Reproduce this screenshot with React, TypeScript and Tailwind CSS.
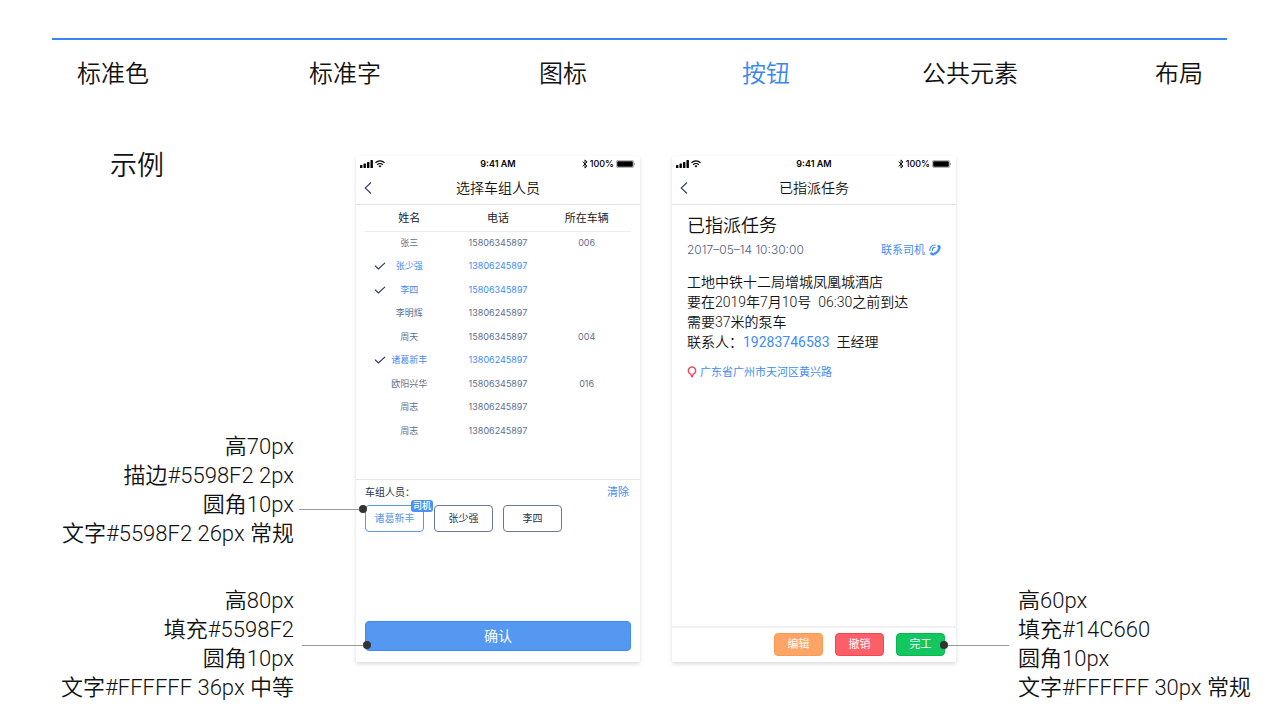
import { useState } from "react";
import type { ReactNode } from "react";
import clsx from "clsx";

const tabs = ["标准色", "标准字", "图标", "按钮", "公共元素", "布局"];

const crew = [
  { id: 1, name: "张三", phone: "15806345897", car: "006" },
  { id: 2, name: "张少强", phone: "13806245897", car: "" },
  { id: 3, name: "李四", phone: "15806345897", car: "" },
  { id: 4, name: "李明辉", phone: "13806245897", car: "" },
  { id: 5, name: "周天", phone: "15806345897", car: "004" },
  { id: 6, name: "诸葛新丰", phone: "13806245897", car: "" },
  { id: 7, name: "欧阳兴华", phone: "15806345897", car: "016" },
  { id: 8, name: "周志", phone: "13806245897", car: "" },
  { id: 9, name: "周志", phone: "13806245897", car: "" },
];

function StatusBar() {
  return (
    <div className="grid h-4 grid-cols-3 items-center pr-1 pl-1 text-[9px] font-semibold text-black">
      <div className="flex items-center gap-0.5">
        <svg width="13" height="8" viewBox="0 0 13 8" aria-hidden="true">
          <rect x="0" y="5" width="2.4" height="3" rx="0.6" />
          <rect x="3.5" y="3.5" width="2.4" height="4.5" rx="0.6" />
          <rect x="7" y="2" width="2.4" height="6" rx="0.6" />
          <rect x="10.5" y="0" width="2.4" height="8" rx="0.6" />
        </svg>
        <svg
          width="10"
          height="8"
          viewBox="0 0 10 8"
          fill="none"
          stroke="black"
          strokeWidth="1.2"
          aria-hidden="true"
        >
          <path d="M0.5 2.8a6.4 6.4 0 0 1 9 0" />
          <path d="M2.2 4.7a4 4 0 0 1 5.6 0" />
          <path d="M3.5 6 5 7.6 6.5 6a2.1 2.1 0 0 0-3 0z" fill="black" stroke="none" />
        </svg>
      </div>
      <span className="text-center">9:41 AM</span>
      <div className="flex items-center justify-end gap-0.5">
        <svg
          width="6"
          height="10"
          viewBox="0 0 6 10"
          fill="none"
          stroke="black"
          strokeWidth="0.9"
          aria-hidden="true"
        >
          <path d="M0.6 2.7 5 7 3 9.1V0.9L5 3 0.6 7.3" />
        </svg>
        <span className="font-medium">100%</span>
        <svg width="20" height="8" viewBox="0 0 20 8" aria-hidden="true">
          <rect x="0.4" y="0.4" width="17.2" height="7.2" rx="1.6" fill="none" stroke="#777" strokeWidth="0.6" />
          <rect x="1.2" y="1.2" width="15.6" height="5.6" rx="0.8" />
          <path d="M18.4 2.6c1 .4 1 2.4 0 2.8z" fill="#777" />
        </svg>
      </div>
    </div>
  );
}

function Phone({ title, children }: { title: string; children: ReactNode }) {
  return (
    <section className="flex min-h-[506px] w-[284px] shrink-0 flex-col bg-white shadow-[0_2px_4px_rgba(0,0,0,0.14)]">
      <StatusBar />
      <header className="grid h-[33px] grid-cols-[24px_1fr_24px] items-center border-b border-[#e3e4e6]">
        <button aria-label="返回" className="flex justify-center">
          <svg
            width="8"
            height="12"
            viewBox="0 0 8 12"
            fill="none"
            stroke="#34405e"
            strokeWidth="1.1"
            aria-hidden="true"
          >
            <path d="M7 0.5 1.2 6 7 11.5" />
          </svg>
        </button>
        <h2 className="text-center text-sm font-[350]">{title}</h2>
      </header>
      {children}
    </section>
  );
}

function CrewPhone() {
  const [picked, setPicked] = useState([6, 2, 3]);

  const toggle = (id: number) =>
    setPicked(
      picked.includes(id) ? picked.filter((p) => p !== id) : [...picked, id]
    );

  return (
    <Phone title="选择车组人员">
      <div className="grow px-[9px]">
        <table className="w-full table-fixed text-center text-[9px] text-[#5f6f8f]">
          <thead className="text-[11px] text-[#222]">
            <tr className="h-[26px] border-b border-[#eceef2]">
              <th className="font-normal">姓名</th>
              <th className="font-normal">电话</th>
              <th className="font-normal">所在车辆</th>
            </tr>
          </thead>
          <tbody>
            {crew.map((person) => (
              <tr
                key={person.id}
                className={clsx(
                  "h-[23px] even:h-6",
                  picked.includes(person.id) && "text-[#3f8cf4]"
                )}
              >
                <td className="p-0">
                  <label className="relative block">
                    <input
                      type="checkbox"
                      className="peer sr-only"
                      checked={picked.includes(person.id)}
                      onChange={() => toggle(person.id)}
                    />
                    <svg
                      width="12"
                      height="8"
                      viewBox="0 0 12 8"
                      fill="none"
                      stroke="#26324d"
                      strokeWidth="1.1"
                      className="invisible absolute top-1/2 left-[9px] -translate-y-1/2 peer-checked:visible"
                      aria-hidden="true"
                    >
                      <path d="M1 3.6 4.4 7 11 0.8" />
                    </svg>
                    {person.name}
                  </label>
                </td>
                <td className="p-0">{person.phone}</td>
                <td className="p-0">{person.car}</td>
              </tr>
            ))}
          </tbody>
        </table>
      </div>
      <div className="border-t border-[#e6e7e9] px-[9px] pb-[11px]">
        <div className="flex h-[25px] items-center justify-between text-[10px]">
          <span className="text-[#26324d]">车组人员：</span>
          <button
            className="pr-0.5 text-[11px] text-[#3f8cf4]"
            onClick={() => setPicked([])}
          >
            清除
          </button>
        </div>
        <div className="flex min-h-[116px] flex-wrap content-start gap-2.5">
          {picked.map((id, index) => (
            <button
              key={id}
              onClick={() => toggle(id)}
              className={clsx(
                "relative h-[27px] w-[59px] rounded border text-[10px]",
                index === 0
                  ? "border-[#5598f2] text-[#5598f2]"
                  : "border-[#6b7891] text-[#26324d]"
              )}
            >
              {crew.find((person) => person.id === id)?.name}
              {index === 0 && (
                <span className="absolute -top-1.5 -right-2.5 rounded-[3px] bg-[#4a92f4] px-0.5 text-[9px] leading-[12px] font-medium text-white">
                  司机
                </span>
              )}
            </button>
          ))}
        </div>
        <button className="h-[30px] w-full rounded border border-[#3f8cf4] bg-[#5598f2] text-sm text-white">
          确认
        </button>
      </div>
    </Phone>
  );
}

function TaskPhone() {
  return (
    <Phone title="已指派任务">
      <div className="grow px-[15px] pt-[9px] text-sm leading-5">
        <h3 className="text-lg leading-6 font-[350]">已指派任务</h3>
        <div className="flex h-6 items-center justify-between text-[11px]">
          <time className="text-xs font-light text-[#4f6085]">
            2017–05–14 10:30:00
          </time>
          <a href="#driver" className="flex items-center gap-1 text-[#3f8cf4]">
            联系司机
            <svg
              width="12"
              height="12"
              viewBox="0 0 12 12"
              fill="none"
              stroke="#3f8cf4"
              strokeLinecap="round"
              strokeLinejoin="round"
              aria-hidden="true"
            >
              <path
                d="M8.6 1.8 9.6 1.1C10.8 1.3 11.5 2.4 11.3 3.8 10.8 7.400 7.600 10.700 4.100 11.200 2.700 11.300 1.400 10.500 1.200 9.200L2.100 8.300 4 9.400C6.800 8.600 8.700 6.700 9.500 4Z"
                fill="#3f8cf4"
                strokeWidth="0.6"
              />
              <path
                d="M0.900 6.800C.4 3.500 3 .8 6.300 1M3.300 6.500C3.200 4.700 4.400 3.400 6.200 3.300"
                strokeWidth="1.1"
              />
            </svg>
          </a>
        </div>
        <div className="mt-2.5 font-[Roboto,'Noto_Sans_CJK_SC',sans-serif] font-[350]">
          <p>工地中铁十二局增城凤凰城酒店</p>
          <p className="whitespace-pre">要在2019年7月10号  06:30之前到达</p>
          <p>需要37米的泵车</p>
          <p className="whitespace-pre">
            联系人：
            <a href="tel:19283746583" className="font-normal text-[#3f8cf4]">
              19283746583
            </a>
            {"  王经理"}
          </p>
        </div>
        <a
          href="#map"
          className="mt-2.5 flex items-center gap-[3px] text-[11px] text-[#3f8cf4]"
        >
          <svg
            width="10"
            height="12"
            viewBox="0 0 10 12"
            fill="none"
            stroke="#f5455c"
            strokeWidth="1.4"
            strokeLinejoin="round"
            aria-hidden="true"
          >
            <path d="M5 11 3.800 8.200A3.700 3.700 0 1 1 6.200 8.200Z" />
          </svg>
          广东省广州市天河区黄兴路
        </a>
      </div>
      <div className="flex justify-end gap-3 border-t-2 border-[#eef0f1] px-[11px] pt-[5px] pb-1.5 text-[11px] text-white">
        <button className="h-[23px] w-[49px] rounded border border-[#fc9a50] bg-[#fda566]">
          编辑
        </button>
        <button className="h-[23px] w-[49px] rounded border border-[#f94350] bg-[#fc5f68]">
          撤销
        </button>
        <button className="h-[23px] w-[49px] rounded border border-[#06b94c] bg-[#14c660]">
          完工
        </button>
      </div>
    </Phone>
  );
}

function Note({
  lines,
  side,
  leader,
}: {
  lines: string[];
  side: "left" | "right";
  leader: string;
}) {
  return (
    <div
      className={clsx(
        "relative font-[Roboto,'Noto_Sans_CJK_SC',sans-serif] text-[22px] leading-[29px] font-[350] whitespace-nowrap",
        side === "left" && "text-right"
      )}
    >
      {lines.map((line) => (
        <p key={line}>{line}</p>
      ))}
      <div
        className={clsx(
          "absolute z-10 flex items-center",
          side === "right" && "flex-row-reverse",
          leader
        )}
      >
        <span className="h-px grow bg-[#999]" />
        <span className="size-2 rounded-full bg-[#333]" />
      </div>
    </div>
  );
}

export default function App() {
  return (
    <div className="bg-white pt-[38px] font-[Inter,'Noto_Sans_CJK_SC',sans-serif] text-[#111]">
      <nav className="mr-[53px] ml-[52px] grid grid-cols-[232fr_230fr_203fr_180fr_233fr_auto] border-t-2 border-[#3a86f0] pt-[18px] pr-6 pl-[25px] text-2xl font-[350]">
        {tabs.map((tab) => (
          <a
            key={tab}
            href={`#${tab}`}
            className={clsx(tab === "按钮" && "text-[#3a86f0]")}
          >
            {tab}
          </a>
        ))}
      </nav>

      <main className="mt-[66px] grid grid-cols-[356fr_auto_324fr]">
        <div className="flex flex-col pr-[62px]">
          <h1 className="-mt-2 mb-[248px] pl-[110px] text-[27px] leading-9 font-[350]">
            示例
          </h1>
          <Note
            side="left"
            leader="top-[73px] left-full ml-[5px] w-[68px]"
            lines={["高70px", "描边#5598F2 2px", "圆角10px", "文字#5598F2 26px 常规"]}
          />
          <div className="pt-[38px]">
            <Note
              side="left"
              leader="top-[55px] left-full ml-2 w-[69px]"
              lines={["高80px", "填充#5598F2", "圆角10px", "文字#FFFFFF 36px 中等"]}
            />
          </div>
        </div>
        <div className="flex items-start gap-8">
          <CrewPhone />
          <TaskPhone />
        </div>
        <div className="flex flex-col justify-end pl-[62px]">
          <Note
            side="right"
            leader="top-[55px] right-full mr-[9px] w-[69px]"
            lines={["高60px", "填充#14C660", "圆角10px", "文字#FFFFFF 30px 常规"]}
          />
        </div>
      </main>
    </div>
  );
}
